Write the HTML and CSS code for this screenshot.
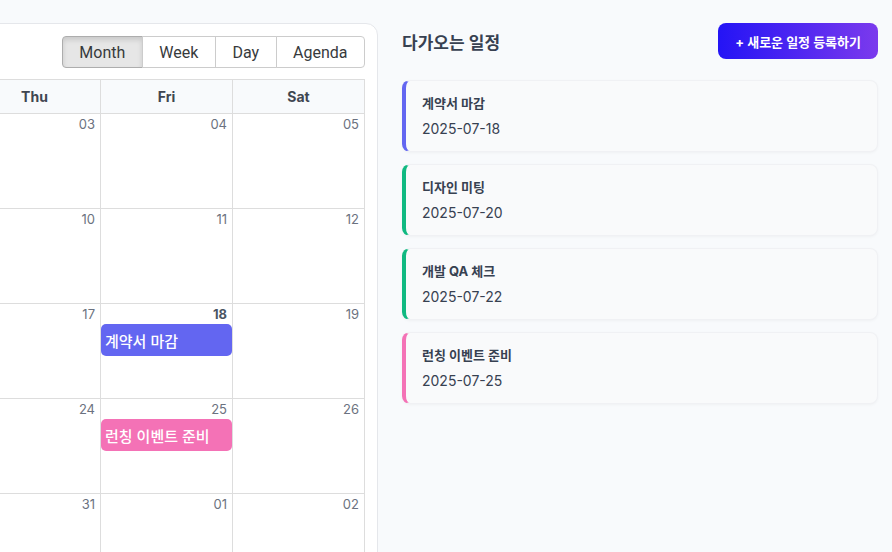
FILE: index.html
```html
<!DOCTYPE html>
<html lang="ko">
<head>
<meta charset="utf-8">
<title>일정 캘린더</title>
<link rel="stylesheet" href="styles.css">
</head>
<body>
<div class="page">
  <section class="cal-card">
    <div class="toolbar">
      <div class="btn-group">
        <button class="tb-btn active">Month</button>
        <button class="tb-btn">Week</button>
        <button class="tb-btn">Day</button>
        <button class="tb-btn">Agenda</button>
      </div>
    </div>
    <div class="month">
      <div class="head">
        <div class="hcell">Sun</div><div class="hcell">Mon</div><div class="hcell">Tue</div><div class="hcell">Wed</div><div class="hcell">Thu</div><div class="hcell">Fri</div><div class="hcell">Sat</div>
      </div>
      <div class="week">
        <div class="day"><span class="num">29</span></div>
        <div class="day"><span class="num">30</span></div>
        <div class="day"><span class="num">01</span></div>
        <div class="day"><span class="num">02</span></div>
        <div class="day"><span class="num">03</span></div>
        <div class="day"><span class="num">04</span></div>
        <div class="day"><span class="num">05</span></div>
      </div>
      <div class="week">
        <div class="day"><span class="num">06</span></div>
        <div class="day"><span class="num">07</span></div>
        <div class="day"><span class="num">08</span></div>
        <div class="day"><span class="num">09</span></div>
        <div class="day"><span class="num">10</span></div>
        <div class="day"><span class="num">11</span></div>
        <div class="day"><span class="num">12</span></div>
      </div>
      <div class="week">
        <div class="day"><span class="num">13</span></div>
        <div class="day"><span class="num">14</span></div>
        <div class="day"><span class="num">15</span></div>
        <div class="day"><span class="num">16</span></div>
        <div class="day"><span class="num">17</span></div>
        <div class="day"><span class="num today">18</span><div class="event ev-blue">계약서 마감</div></div>
        <div class="day"><span class="num">19</span></div>
      </div>
      <div class="week">
        <div class="day"><span class="num">20</span><div class="event ev-green">디자인 미팅</div></div>
        <div class="day"><span class="num">21</span></div>
        <div class="day"><span class="num">22</span><div class="event ev-green">개발 QA 체크</div></div>
        <div class="day"><span class="num">23</span></div>
        <div class="day"><span class="num">24</span></div>
        <div class="day"><span class="num">25</span><div class="event ev-pink">런칭 이벤트 준비</div></div>
        <div class="day"><span class="num">26</span></div>
      </div>
      <div class="week">
        <div class="day"><span class="num">27</span></div>
        <div class="day"><span class="num">28</span></div>
        <div class="day"><span class="num">29</span></div>
        <div class="day"><span class="num">30</span></div>
        <div class="day"><span class="num">31</span></div>
        <div class="day"><span class="num">01</span></div>
        <div class="day"><span class="num">02</span></div>
      </div>
    </div>
  </section>

  <aside class="side">
    <div class="side-head">
      <h2 class="side-title">다가오는 일정</h2>
      <button class="add-btn">+ 새로운 일정 등록하기</button>
    </div>
    <ul class="list">
      <li class="item item-blue"><div class="item-title">계약서 마감</div><div class="item-date">2025-07-18</div></li>
      <li class="item item-green"><div class="item-title">디자인 미팅</div><div class="item-date">2025-07-20</div></li>
      <li class="item item-green"><div class="item-title">개발 QA 체크</div><div class="item-date">2025-07-22</div></li>
      <li class="item item-pink"><div class="item-title">런칭 이벤트 준비</div><div class="item-date">2025-07-25</div></li>
    </ul>
  </aside>
</div>
</body>
</html>
```

FILE: styles.css
```css
* { box-sizing: border-box; }
html, body {
  margin: 0;
  padding: 0;
  background: #f8fafc;
  overflow: hidden;
  font-family: Inter, "Noto Sans CJK KR", sans-serif;
}
.page {
  display: flex;
  align-items: flex-start;
  padding: 23px 14px 0 0;
}
.cal-card {
  flex: 0 0 951px;
  width: 951px;
  margin-left: -573px;
  background: #fff;
  border: 1px solid #e5e7eb;
  border-radius: 12px;
  padding: 12px;
  height: 640px;
}
.toolbar {
  display: flex;
  justify-content: flex-end;
  margin-bottom: 11px;
}
.btn-group { display: flex; }
.tb-btn {
  height: 32px;
  padding: 0 16.5px;
  border: 1px solid #ccc;
  background: #fff;
  color: #373a3c;
  font-family: Roboto, "Noto Sans", sans-serif;
  font-size: 16px;
  border-radius: 0;
  margin: 0;
}
.tb-btn + .tb-btn { margin-left: -1px; }
.tb-btn:first-child { border-radius: 4px 0 0 4px; }
.tb-btn:last-child { border-radius: 0 4px 4px 0; }
.tb-btn.active {
  background: #e6e6e6;
  border-color: #adadad;
  box-shadow: inset 0 3px 5px rgba(0,0,0,0.125);
}
.month {
  width: 925px;
  border-top: 1px solid #ddd;
  border-right: 1px solid #ddd;
}
.head, .week {
  display: grid;
  grid-template-columns: repeat(7, 132px);
}
.hcell {
  height: 34px;
  border-left: 1px solid #ddd;
  border-bottom: 1px solid #ddd;
  background: #f8fafc;
  display: flex;
  align-items: center;
  justify-content: center;
  font-size: 14px;
  font-weight: 700;
  color: #3f4651;
}
.week { height: 95px; }
.day {
  border-left: 1px solid #ddd;
  border-bottom: 1px solid #ddd;
  display: flex;
  flex-direction: column;
}
.num {
  display: block;
  height: 20px;
  padding: 2px 5px 0 0;
  text-align: right;
  font-size: 13px;
  line-height: 16px;
  color: #6b7280;
}
.num.today { font-weight: 700; color: #4b5563; }
.event {
  height: 32px;
  border-radius: 5px;
  padding: 0 4px;
  display: flex;
  align-items: center;
  color: #fff;
  font-size: 15px;
  font-weight: 500;
  white-space: nowrap;
  overflow: hidden;
}
.ev-blue { background: #6366f1; }
.ev-green { background: #10b981; }
.ev-pink { background: #f472b6; }

.side {
  flex: 1 1 auto;
  margin-left: 24px;
}
.side-head {
  display: flex;
  justify-content: space-between;
  align-items: center;
  height: 36px;
  margin-bottom: 21px;
}
.side-title {
  margin: 0;
  font-size: 17px;
  font-weight: 600;
  color: #374151;
}
.add-btn {
  height: 36px;
  padding: 0 17px;
  border: none;
  border-radius: 8px;
  background: linear-gradient(90deg, #2414f5, #7b3aed);
  color: #fff;
  font-family: Inter, "Noto Sans CJK KR", sans-serif;
  font-size: 13px;
  font-weight: 700;
}
.list {
  list-style: none;
  margin: 0;
  padding: 0;
  display: flex;
  flex-direction: column;
  gap: 12px;
}
.item {
  background: #f9fafb;
  border: 1px solid #f0f1f4;
  border-left: 4px solid #6366f1;
  border-radius: 8px;
  padding: 12px 16px;
  box-shadow: 0 1px 3px rgba(0,0,0,0.04);
}
.item-blue { border-left-color: #6366f1; }
.item-green { border-left-color: #10b981; }
.item-pink { border-left-color: #f472b6; }
.item-title {
  font-size: 13px;
  font-weight: 700;
  line-height: 21px;
  color: #374151;
  margin-bottom: 4px;
}
.item-date {
  font-size: 14px;
  line-height: 21px;
  color: #374151;
}
```
